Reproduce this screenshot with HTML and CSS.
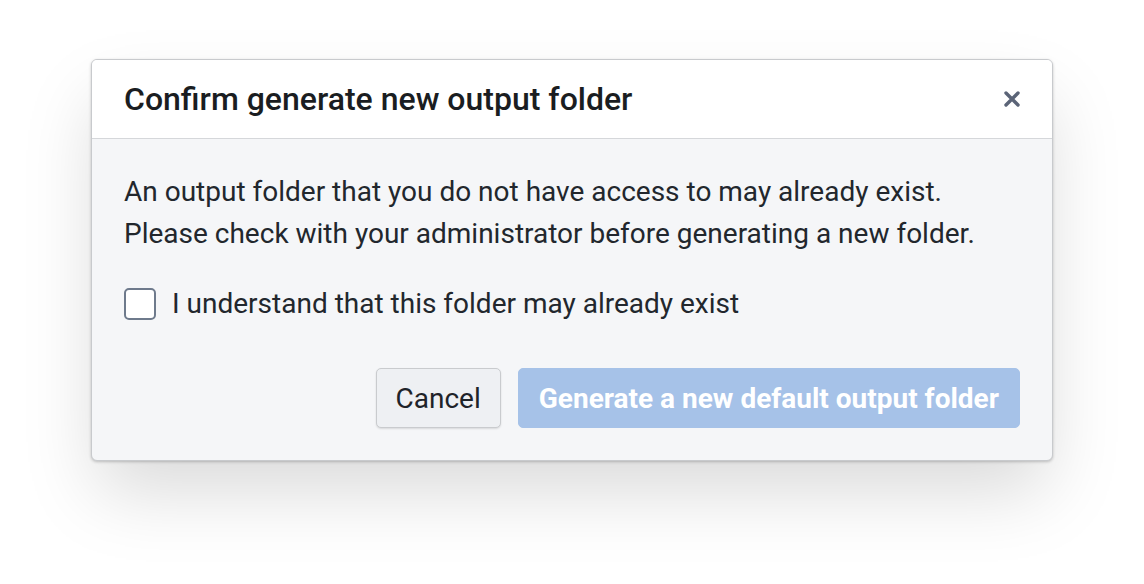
FILE: index.html
```html
<!DOCTYPE html>
<html lang="en">
<head>
<meta charset="utf-8">
<title>Confirm generate new output folder</title>
<link rel="stylesheet" href="styles.css">
</head>
<body>
<div class="dialog" role="dialog">
  <div class="dialog-header">
    <h2 class="dialog-title">Confirm generate new output folder</h2>
    <button class="close-btn" aria-label="Close">
      <svg width="18" height="18" viewBox="0 0 18 18"><path d="M3 3 L15 15 M15 3 L3 15" stroke="#5b6477" stroke-width="3.4" stroke-linecap="round"/></svg>
    </button>
  </div>
  <div class="dialog-body">
    <p class="message">An output folder that you do not have access to may already exist.<br>Please check with your administrator before generating a new folder.</p>
    <label class="check-row">
      <span class="checkbox"></span>
      <span class="check-label">I understand that this folder may already exist</span>
    </label>
    <div class="actions">
      <button class="btn btn-secondary">Cancel</button>
      <button class="btn btn-primary" disabled>Generate a new default output folder</button>
    </div>
  </div>
</div>
</body>
</html>
```

FILE: styles.css
```css
html, body {
  margin: 0;
  padding: 0;
  background: #ffffff;
}
body {
  font-family: Roboto, "Liberation Sans", sans-serif;
  color: #1e2329;
  padding-top: 59px;
  min-height: 100vh;
  box-sizing: border-box;
}
.dialog {
  width: 960px;
  margin: 0 auto;
  border: 1px solid #c8cacd;
  border-radius: 6px;
  background: #f5f6f8;
  box-shadow: 0 1px 3px rgba(0,0,0,0.22), 0 36px 70px -6px rgba(0,0,0,0.15);
  overflow: hidden;
}
.dialog-header {
  height: 78px;
  background: #ffffff;
  border-bottom: 1px solid #d5d7da;
  display: flex;
  align-items: center;
  justify-content: space-between;
  padding: 0 31px 0 32px;
}
.dialog-title {
  margin: 0;
  font-size: 32px;
  font-weight: 500;
  color: #1a1d21;
}
.close-btn {
  border: 0;
  background: none;
  padding: 0;
  width: 18px;
  height: 18px;
  display: flex;
  align-items: center;
  justify-content: center;
}
.dialog-body {
  padding: 32px;
}
.message {
  margin: 0;
  font-size: 28px;
  line-height: 42px;
  color: #22272d;
}
.check-row {
  display: flex;
  align-items: center;
  gap: 16px;
  margin-top: 28px;
  line-height: 42px;
}
.checkbox {
  width: 28px;
  height: 28px;
  border: 2px solid #6e7a8c;
  border-radius: 5px;
  background: #ffffff;
}
.check-label {
  font-size: 28px;
  color: #22272d;
}
.actions {
  display: flex;
  justify-content: flex-end;
  gap: 17px;
  margin-top: 43px;
}
.btn {
  height: 60px;
  border-radius: 5px;
  font-family: Roboto, "Liberation Sans", sans-serif;
  font-size: 28px;
  padding: 0 19px;
}
.btn-secondary {
  background: #eef0f3;
  border: 1px solid #c9cbce;
  color: #1e2329;
  box-shadow: 0 1px 2px rgba(0,0,0,0.12);
}
.btn-primary {
  background: #a6c2e8;
  border: 1px solid #a6c2e8;
  color: #ffffff;
  font-weight: 700;
  padding: 0 20px;
}
```
